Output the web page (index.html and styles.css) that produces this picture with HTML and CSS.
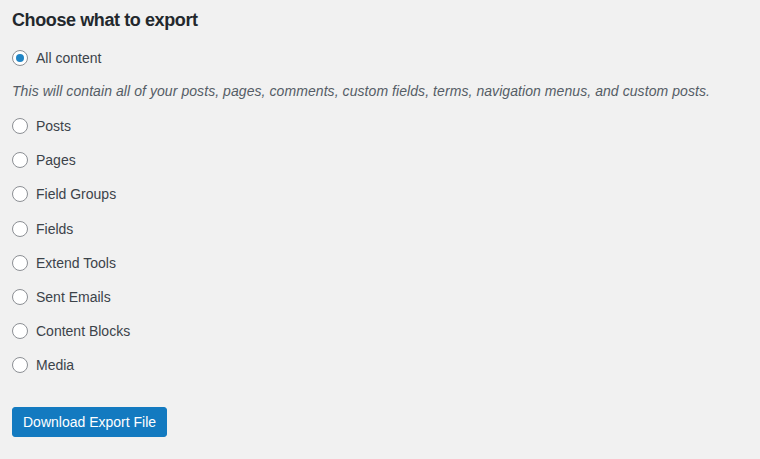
FILE: index.html
```html
<!DOCTYPE html>
<html lang="en">
<head>
    <meta charset="UTF-8">
    <title>Export</title>

    <link rel="stylesheet" href="styles.css">
</head>
<body>

<div id="export">
    <h2>Choose what to export</h2>

    <fieldset>
        <label class="choice"><input type="radio" name="content" value="all" checked><span class="dot"></span>All content</label>
        <p class="description">This will contain all of your posts, pages, comments, custom fields, terms, navigation menus, and custom posts.</p>

        <label class="choice"><input type="radio" name="content" value="posts"><span class="dot"></span>Posts</label>
        <label class="choice"><input type="radio" name="content" value="pages"><span class="dot"></span>Pages</label>
        <label class="choice"><input type="radio" name="content" value="acf-field-group"><span class="dot"></span>Field Groups</label>
        <label class="choice"><input type="radio" name="content" value="acf-field"><span class="dot"></span>Fields</label>
        <label class="choice"><input type="radio" name="content" value="extend-tools"><span class="dot"></span>Extend Tools</label>
        <label class="choice"><input type="radio" name="content" value="sent-emails"><span class="dot"></span>Sent Emails</label>
        <label class="choice"><input type="radio" name="content" value="content-blocks"><span class="dot"></span>Content Blocks</label>
        <label class="choice"><input type="radio" name="content" value="attachment"><span class="dot"></span>Media</label>
    </fieldset>

    <div class="submit">
        <button type="button" id="download">Download Export File</button>
    </div>
</div>

</body>
</html>
```

FILE: styles.css
```css
body {
    margin: 0;
    background-color: #f1f1f1;
    font-family: "Liberation Sans", Arial, sans-serif;
    font-size: 14px;
    color: #3c434a;
}

#export {
    display: flex;
    flex-direction: column;
    padding: 9px 12px;
}

h2 {
    font-size: 18px;
    font-weight: 700;
    letter-spacing: -0.4px;
    color: #23282d;
    margin: 0 0 10px;
    line-height: 22px;
}

fieldset {
    border: 0;
    margin: 0;
    padding: 0;
    display: flex;
    flex-direction: column;
}

.choice {
    display: flex;
    align-items: center;
    gap: 8px;
    height: 34.15px;
}

.choice input {
    display: none;
}

.dot {
    width: 14px;
    height: 14px;
    border: 1px solid #8c8f94;
    border-radius: 50%;
    background-color: #fff;
    display: flex;
    align-items: center;
    justify-content: center;
}

.choice input:checked + .dot::after {
    content: "";
    width: 8px;
    height: 8px;
    border-radius: 50%;
    background-color: #2185c5;
}

.description {
    font-style: italic;
    letter-spacing: 0.07px;
    color: #555d66;
    margin: 0;
    height: 34px;
    line-height: 32px;
}

.submit {
    padding-top: 25px;
}

#download {
    font-family: inherit;
    font-size: 14px;
    color: #fff;
    background-color: #137ac0;
    border: 1px solid #137ac0;
    border-radius: 3px;
    height: 30px;
    padding: 0 10px;
}
```
